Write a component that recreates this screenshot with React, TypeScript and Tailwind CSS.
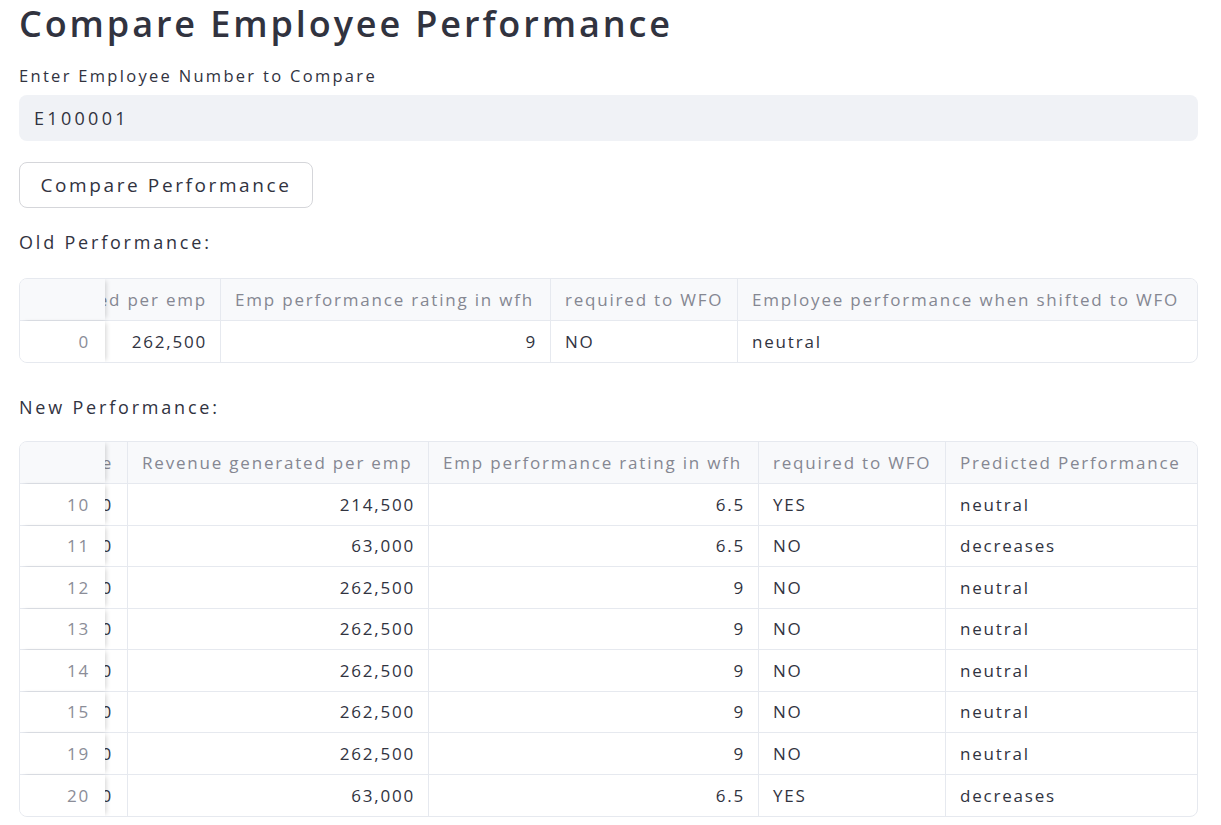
import React from "react";

const font = { fontFamily: '"Open Sans", "Noto Sans", sans-serif' };

type Col = { w: number; head: string; align: "left" | "right"; clip?: boolean; narrow?: boolean };

const oldCols: Col[] = [
  { w: 116, head: "Revenue generated per emp", align: "right", clip: true },
  { w: 330, head: "Emp performance rating in wfh", align: "right" },
  { w: 187, head: "required to WFO", align: "left" },
  { w: 461, head: "Employee performance when shifted to WFO", align: "left" },
];

const newCols: Col[] = [
  { w: 23, head: "Employee", align: "right", clip: true, narrow: true },
  { w: 301, head: "Revenue generated per emp", align: "right" },
  { w: 330, head: "Emp performance rating in wfh", align: "right" },
  { w: 187, head: "required to WFO", align: "left" },
  { w: 253, head: "Predicted Performance", align: "left" },
];

const oldRows = [{ idx: "0", cells: ["262,500", "9", "NO", "neutral"] }];

const newRows = [
  { idx: "10", cells: ["100", "214,500", "6.5", "YES", "neutral"] },
  { idx: "11", cells: ["100", "63,000", "6.5", "NO", "decreases"] },
  { idx: "12", cells: ["100", "262,500", "9", "NO", "neutral"] },
  { idx: "13", cells: ["100", "262,500", "9", "NO", "neutral"] },
  { idx: "14", cells: ["100", "262,500", "9", "NO", "neutral"] },
  { idx: "15", cells: ["100", "262,500", "9", "NO", "neutral"] },
  { idx: "19", cells: ["100", "262,500", "9", "NO", "neutral"] },
  { idx: "20", cells: ["100", "63,000", "6.5", "YES", "decreases"] },
];

function cellPad(c: Col, right: boolean) {
  if (c.narrow) return "pl-0 pr-[14px]";
  return right ? "pl-[14px] pr-[13px]" : "pl-[14px] pr-[14px]";
}

function DataTable({ cols, rows, rowH }: { cols: Col[]; rows: { idx: string; cells: string[] }[]; rowH: string }) {
  return (
    <div className="w-[1179px] overflow-hidden rounded-[8px] border border-[#e6e9ef]">
      <div className="flex h-[42px] border-b border-[#e6e9ef] bg-[#f8f9fb]">
        <div className="relative z-10 w-[85px] shrink-0 bg-[#f8f9fb] shadow-[3px_0_5px_-2px_rgba(0,0,0,0.18)]" />
        {cols.map((c, i) => (
          <div
            key={i}
            style={{ width: c.w }}
            className={`flex shrink-0 items-center overflow-hidden whitespace-nowrap text-[17px] tracking-[1.8px] text-[#858792] ${cellPad(c, !!c.clip)} ${i < cols.length - 1 ? "border-r border-[#e6e9ef]" : ""} ${c.clip ? "justify-end" : "justify-start"}`}
          >
            {c.head}
          </div>
        ))}
      </div>
      {rows.map((r, ri) => (
        <div key={ri} className={`flex ${rowH} ${ri < rows.length - 1 ? "border-b border-[#e6e9ef]" : ""}`}>
          <div className="relative z-10 flex w-[85px] shrink-0 items-center justify-end bg-white pr-[15px] text-[17px] tracking-[1.8px] text-[#8b8d98] shadow-[3px_0_5px_-2px_rgba(0,0,0,0.18)]">
            {r.idx}
          </div>
          {cols.map((c, i) => (
            <div
              key={i}
              style={{ width: c.w }}
              className={`flex shrink-0 items-center overflow-hidden whitespace-nowrap text-[17px] tracking-[1.8px] text-[#31333f] ${cellPad(c, c.align === "right")} ${i < cols.length - 1 ? "border-r border-[#e6e9ef]" : ""} ${c.align === "right" ? "justify-end" : "justify-start"}`}
            >
              {r.cells[i]}
            </div>
          ))}
        </div>
      ))}
    </div>
  );
}

export default function App() {
  return (
    <div style={font} className="min-h-[825px] w-[1221px] bg-white text-[#31333f]">
      <div className="px-[19px] pt-[2px]">
        <h1 className="text-[36px] font-semibold leading-[44px] tracking-[2.9px] text-[#31333f]">Compare Employee Performance</h1>
        <div className="mt-[20px] text-[16.5px] leading-[20px] tracking-[2.3px] text-[#31333f]">Enter Employee Number to Compare</div>
        <div className="mt-[9px] flex h-[46px] w-[1179px] items-center rounded-[8px] bg-[#f0f2f6] px-[15px] text-[18px] tracking-[3.3px] text-[#31333f]">
          E100001
        </div>
        <div className="mt-[21px] flex h-[46px] w-[294px] items-center justify-center rounded-[8px] border border-[#d5d6da] bg-white text-[19px] tracking-[2.6px] text-[#31333f]">
          Compare Performance
        </div>
        <div className="mt-[22px] text-[18px] leading-[24px] tracking-[2.8px] text-[#31333f]">Old Performance:</div>
        <div className="mt-[24px]">
          <DataTable cols={oldCols} rows={oldRows} rowH="h-[41px]" />
        </div>
        <div className="mt-[32px] text-[18px] leading-[24px] tracking-[2.8px] text-[#31333f]">New Performance:</div>
        <div className="mt-[22px]">
          <DataTable cols={newCols} rows={newRows} rowH="h-[41.5px]" />
        </div>
      </div>
    </div>
  );
}
